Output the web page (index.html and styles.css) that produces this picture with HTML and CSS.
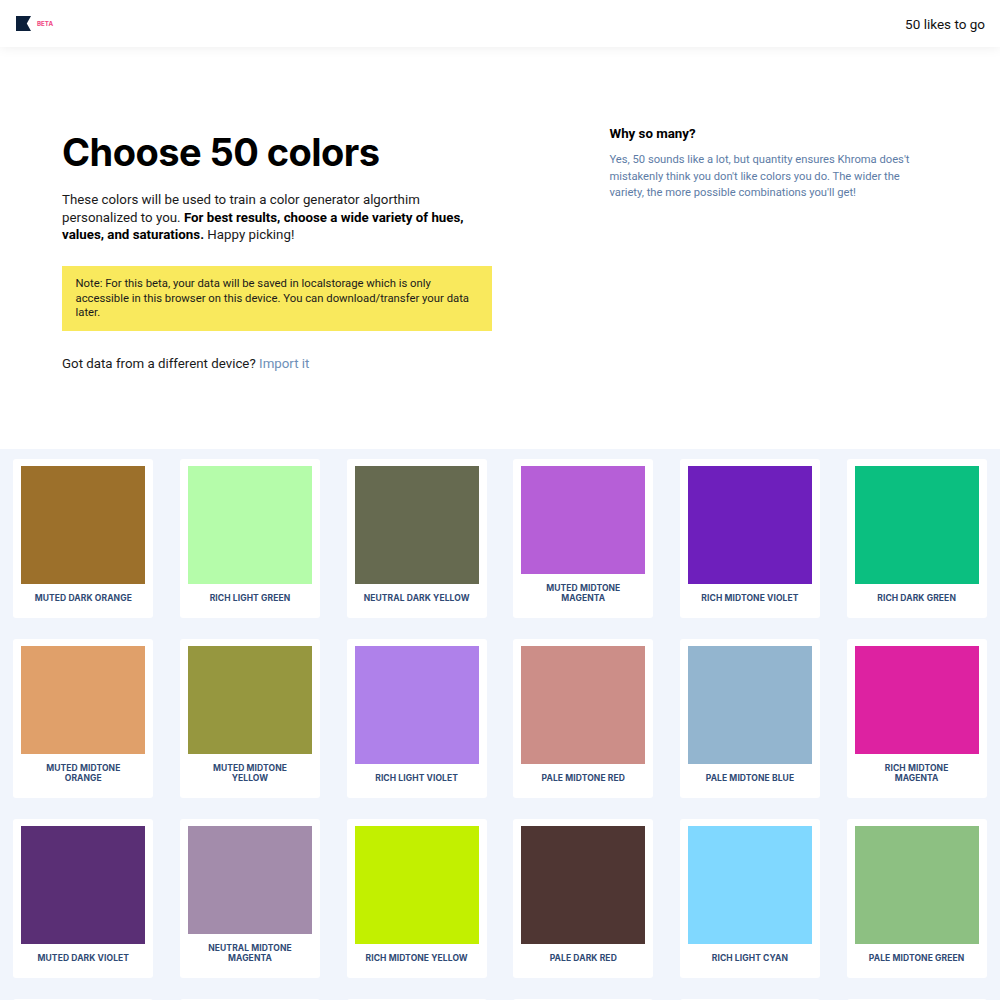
FILE: index.html
```html
<!DOCTYPE html>
<html lang="en">
<head>
  <meta charset="UTF-8" />
  <title>Khroma</title>
  <link rel="stylesheet" href="styles.css">
</head>
<body>
  <header class="topBar">
    <div class="brand">
      <svg class="logo" viewBox="0 0 16 16" aria-label="Khroma"><path d="M0 0H16L11.5 8L16 16H0Z" fill="#0b1f3a"/></svg>
      <span class="beta">BETA</span>
    </div>
    <div class="likesLeft">50 likes to go</div>
  </header>

  <section class="intro">
    <div class="introMain">
      <h1>Choose 50 colors</h1>
      <p class="lead">These colors will be used to train a color generator algorthim personalized to you. <strong>For best results, choose a wide variety of hues, values, and saturations.</strong> Happy picking!</p>
      <div class="note">Note: For this beta, your data will be saved in localstorage which is only accessible in this browser on this device. You can download/transfer your data later.</div>
      <p class="importLine">Got data from a different device? <a href="#">Import it</a></p>
    </div>
    <aside class="introSide">
      <h2>Why so many?</h2>
      <p>Yes, 50 sounds like a lot, but quantity ensures Khroma does't mistakenly think you don't like colors you do. The wider the variety, the more possible combinations you'll get!</p>
    </aside>
  </section>

  <section class="colorGrid">
    <div class="card"><div class="swatch" style="background:#9c702b"></div><div class="label">Muted dark orange</div></div>
    <div class="card"><div class="swatch" style="background:#b5fcaa"></div><div class="label">Rich light green</div></div>
    <div class="card"><div class="swatch" style="background:#666a50"></div><div class="label">Neutral dark yellow</div></div>
    <div class="card"><div class="swatch" style="background:#b65fd7"></div><div class="label">Muted midtone magenta</div></div>
    <div class="card"><div class="swatch" style="background:#6e1fbc"></div><div class="label">Rich midtone violet</div></div>
    <div class="card"><div class="swatch" style="background:#0bbf80"></div><div class="label">Rich dark green</div></div>

    <div class="card"><div class="swatch" style="background:#e0a06a"></div><div class="label">Muted midtone orange</div></div>
    <div class="card"><div class="swatch" style="background:#96973f"></div><div class="label">Muted midtone yellow</div></div>
    <div class="card"><div class="swatch" style="background:#af81ea"></div><div class="label">Rich light violet</div></div>
    <div class="card"><div class="swatch" style="background:#cc8e88"></div><div class="label">Pale midtone red</div></div>
    <div class="card"><div class="swatch" style="background:#93b5cf"></div><div class="label">Pale midtone blue</div></div>
    <div class="card"><div class="swatch" style="background:#dd22a1"></div><div class="label">Rich midtone magenta</div></div>

    <div class="card"><div class="swatch" style="background:#5a2f75"></div><div class="label">Muted dark violet</div></div>
    <div class="card"><div class="swatch" style="background:#a38cab"></div><div class="label">Neutral midtone magenta</div></div>
    <div class="card"><div class="swatch" style="background:#c2f000"></div><div class="label">Rich midtone yellow</div></div>
    <div class="card"><div class="swatch" style="background:#4f3633"></div><div class="label">Pale dark red</div></div>
    <div class="card"><div class="swatch" style="background:#80d8ff"></div><div class="label">Rich light cyan</div></div>
    <div class="card"><div class="swatch" style="background:#8dc082"></div><div class="label">Pale midtone green</div></div>

    <div class="card"></div>
    <div class="card"></div>
    <div class="card"></div>
    <div class="card"></div>
    <div class="card"></div>
    <div class="card"></div>
  </section>
</body>
</html>
```

FILE: styles.css
```css
* { margin: 0; padding: 0; box-sizing: border-box; }
html, body {
  font-family: 'Roboto', 'Liberation Sans', sans-serif;
  background: #fff;
  color: #000;
}

.topBar {
  height: 47px;
  padding: 0 15px 0 16px;
  display: flex;
  align-items: center;
  justify-content: space-between;
  background: #fff;
  box-shadow: 0 0 12px rgba(0,0,0,0.08);
}
.brand { display: flex; align-items: center; gap: 6px; }
.logo { width: 15px; height: 15px; display: block; }
.beta { font-family: 'Inter', sans-serif; font-size: 6.2px; font-weight: 700; color: #f0457f; margin-bottom: 1px; }
.likesLeft { font-size: 13.5px; color: #111; }

.intro {
  height: 402px;
  padding: 81px 62px 0;
  display: flex;
}
.introMain { width: 430px; margin-right: 117.5px; }
.introSide { width: 310px; }

h1 {
  font-family: 'Inter', sans-serif;
  font-size: 38px;
  line-height: 48px;
  font-weight: 700;
  letter-spacing: -0.55px;
  margin-bottom: 15px;
}
.lead { font-size: 13.3px; line-height: 17.5px; color: #1a1a1a; }
.lead strong { font-weight: 700; color: #000; }
.note {
  margin-top: 22px;
  padding: 11.5px 13.5px 9.5px;
  background: #f9e95d;
  font-size: 11.3px;
  line-height: 14.7px;
  color: #1a1a1a;
}
.importLine { margin-top: 24px; font-size: 13.3px; line-height: 18px; color: #1a1a1a; }
.importLine a { color: #6d8fb8; text-decoration: none; }

.introSide h2 { font-size: 13.3px; line-height: 16px; font-weight: 700; margin-bottom: 10px; margin-top: -2px; }
.introSide p { font-size: 11.2px; line-height: 16.5px; color: #5d7ca6; }

.colorGrid {
  background: #f1f5fc;
  padding: 10px 13.33px 20px;
  display: grid;
  grid-template-columns: repeat(6, 140px);
  justify-content: space-between;
  grid-auto-rows: 159px;
  row-gap: 21px;
}
.card {
  background: #fff;
  border-radius: 3px;
  padding: 7px 8px 15.5px;
  display: flex;
  flex-direction: column;
}
.swatch { flex: 1; }
.label {
  margin-top: 8.5px;
  padding: 0 8px;
  font-family: 'Inter', sans-serif;
  font-size: 8.5px;
  line-height: 10px;
  font-weight: 700;
  letter-spacing: 0.1px;
  text-align: center;
  text-transform: uppercase;
  color: #2f4a75;
}
```
